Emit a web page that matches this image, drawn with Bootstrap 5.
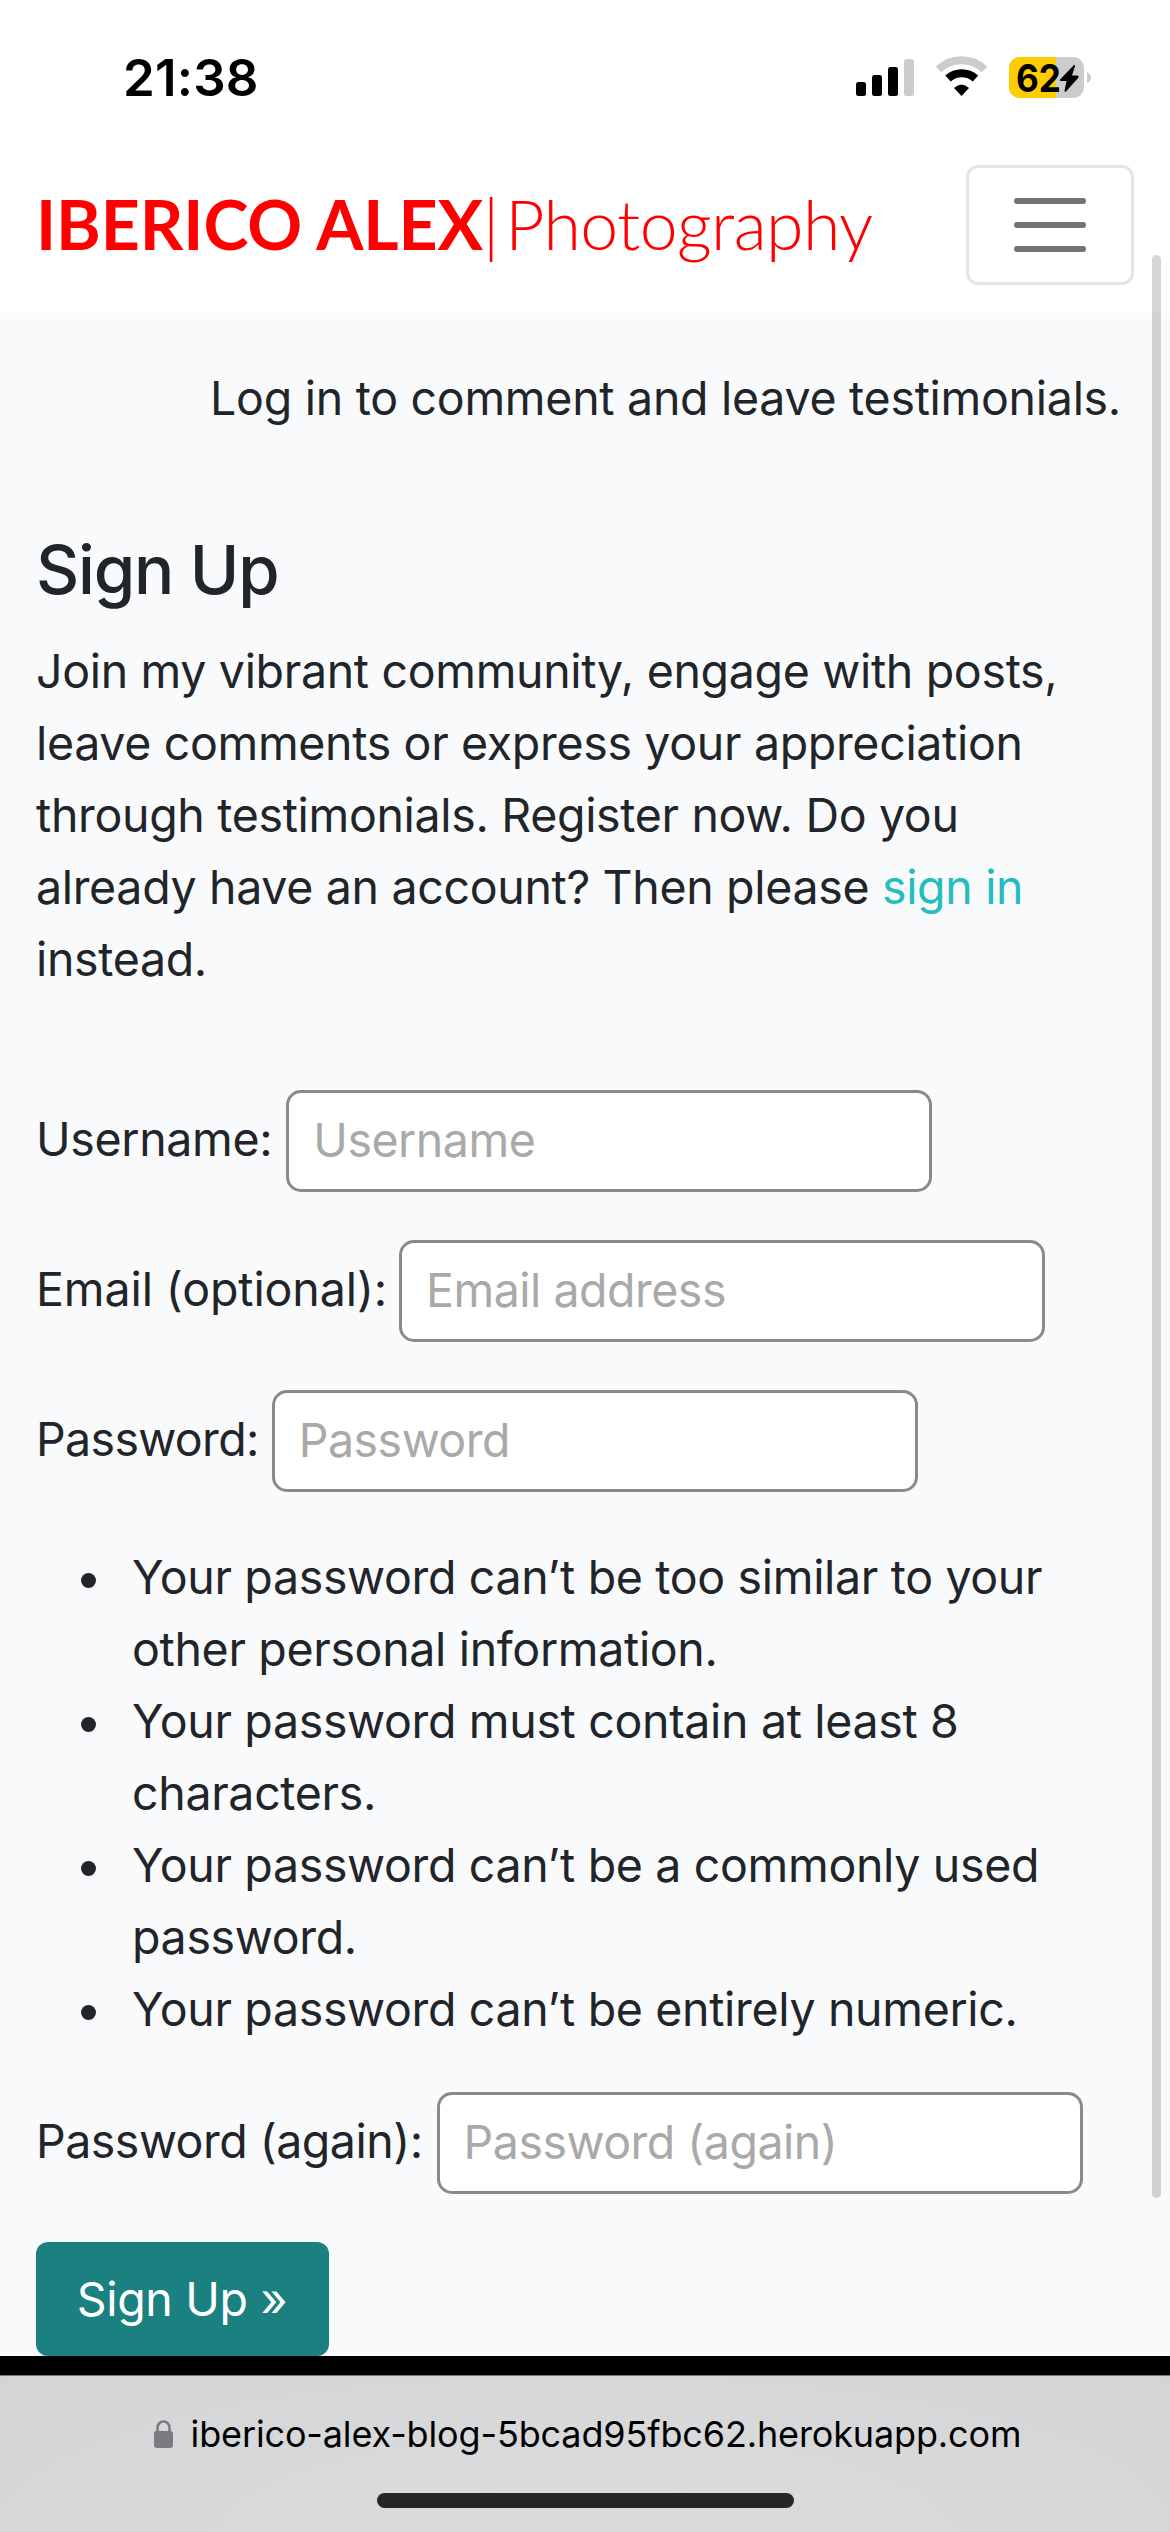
<!DOCTYPE html>
<html lang="en">
<head>
<meta charset="utf-8">
<meta name="viewport" content="width=device-width, initial-scale=1">
<title>Iberico Alex | Photography</title>
<link href="https://cdn.jsdelivr.net/npm/bootstrap@5.3.0/dist/css/bootstrap.min.css" rel="stylesheet">
<style>
body{width:1170px;height:2532px;overflow:hidden;background:#f9fafc;color:#212529;font:400 46.5px/72px Inter,"Liberation Sans",sans-serif;letter-spacing:-.33px}
.status-bar{height:153px;padding:57px 79px 0 123px}
.clock{font-size:51px;font-weight:600;line-height:42px;color:#000;letter-spacing:.2px}
.site-nav{height:160px;padding:12px 36px 28px;--bs-navbar-padding-y:0}
.site-nav .navbar-brand{font-family:Lato,sans-serif;font-size:68px;line-height:118px;color:#f00;letter-spacing:-.1px;margin:0;padding:0}
.site-nav .navbar-brand:hover{color:#f00}
.site-nav .thin{font-weight:300;letter-spacing:-.6px}
.site-nav .thin-bar{font-weight:300;margin-right:6px}
.site-nav .navbar-toggler{width:168px;height:120px;border:3px solid #e5e5e5;border-radius:12px}
.page-main{height:2043px;overflow:hidden;padding:49px 36px 0}
.login-note{padding-right:13px;margin-bottom:96px;letter-spacing:-.28px}
.page-main h1{font-size:67px;font-weight:500;line-height:80px;margin-bottom:25px;letter-spacing:-1.2px}
.page-main a{color:#24bdbd}
.intro{margin-bottom:95px}
.field-row{height:102px;margin-bottom:48px}
.field-row label{padding-bottom:5px;margin-right:14px}
.field-row .lbl-email{letter-spacing:-.1px;margin-right:12px}
.field-row .lbl-pass{letter-spacing:-.65px;margin-right:13px}
.field-row .lbl-again{letter-spacing:-.5px}
.field-row .form-control{width:646px;height:102px;border:3px solid #8a898e;border-radius:15px;padding:0 24px 3px;font-size:46.5px;letter-spacing:-.5px;background:#fff}
.field-row .form-control::placeholder{color:#a9a9a9}
.rules{padding-left:96px;margin:49px 0 47px}
.rules li::before{content:"";position:absolute;left:-51px;top:32px;width:15px;height:15px;border-radius:50%;background:#212529}
.btn-signup{width:293px;height:114px;border:0;border-radius:12px;background:#1a8080;color:#fff;font-size:46.5px;padding:2px 1px 0 0;letter-spacing:-.3px}
.divider{height:20px;background:#000;border-bottom:1px solid #77777a}
.url-bar{height:156px;background:radial-gradient(ellipse at 50% 100%,#dadbdd 20%,#d3d4d6 100%);padding-top:36px}
.url-line{gap:18px;padding-left:5px}
.url-text{font-size:36px;line-height:44px;color:#000;letter-spacing:-.14px}
.home-line{width:417px;height:15px;border-radius:8px;background:#272727;margin-top:37px}
.scroll-thumb{position:absolute;left:1152px;top:255px;width:9px;height:1943px;border-radius:5px;background:rgba(0,0,0,.16)}
</style>
<script src="https://cdn.jsdelivr.net/npm/bootstrap@5.3.0/dist/js/bootstrap.bundle.min.js"></script>
</head>
<body class="position-relative">
<header class="bg-white">
  <div class="status-bar d-flex justify-content-between align-items-start">
    <span class="clock">21:38</span>
    <svg width="240" height="44" viewBox="0 0 240 44" overflow="visible" aria-label="Signal, Wi-Fi, battery 62%">
      <g><rect x="5" y="25" width="10" height="14" rx="2.5"/><rect x="21" y="18" width="10" height="21" rx="2.5"/><rect x="37" y="10" width="10" height="29" rx="2.5"/><rect x="53" y="2" width="10" height="37" rx="2.5" fill="#ccc"/></g>
      <g fill="none" stroke-width="8"><path d="M87.500 12.500A33 33 0 0 1 133.500 12.500" stroke="#ccc"/><path d="M97 21.500A20.500 20.500 0 0 1 124.500 21.500" stroke="#000"/></g>
      <path d="M103 31Q110.500 24 118 31L110.500 39Z"/>
      <clipPath id="cell"><rect x="158" width="75" height="41" rx="11"/></clipPath>
      <g clip-path="url(#cell)"><rect x="158" width="75" height="41" fill="#ccc"/><rect x="158" width="47" height="41" fill="#fc0"/></g>
      <path d="M236 15Q240 17 240 20.500T236 26Z" fill="#ccc"/>
      <text x="165" y="34.500" font-family="Inter" font-weight="700" font-size="38" letter-spacing="0" textLength="45" lengthAdjust="spacingAndGlyphs">62</text>
      <path d="M223 8L209 22.500Q208.500 24 210 24H215.500L213.500 34Q214 35.500 215 34.500L227.500 20.500Q228 19 226.500 18.500H221L224 9Q224 7.500 223 8Z"/>
    </svg>
  </div>
  <nav class="navbar site-nav align-items-start">
    <a class="navbar-brand" href="#"><b>IBERICO ALEX</b><span class="thin-bar">|</span><span class="thin">Photography</span></a>
    <button class="navbar-toggler d-flex align-items-center justify-content-center p-0" type="button" aria-label="Toggle navigation">
      <svg width="72" height="54" viewBox="0 0 72 54" stroke="#737373" stroke-width="6" stroke-linecap="round"><path d="M3 3H69M3 27H69M3 51H69"/></svg>
    </button>
  </nav>
</header>
<main class="page-main">
  <p class="login-note text-end">Log in to comment and leave testimonials.</p>
  <h1>Sign Up</h1>
  <p class="intro">Join my vibrant community, engage with posts,<br>leave comments or express your appreciation<br>through testimonials. Register now. Do you<br>already have an account? Then please <a href="#" class="text-decoration-none">sign in</a><br>instead.</p>
  <form>
    <div class="field-row d-flex align-items-center"><label for="u">Username:</label><input id="u" class="form-control" placeholder="Username"></div>
    <div class="field-row d-flex align-items-center"><label class="lbl-email" for="e">Email (optional):</label><input id="e" type="email" class="form-control" placeholder="Email address"></div>
    <div class="field-row d-flex align-items-center"><label class="lbl-pass" for="p">Password:</label><input id="p" type="password" class="form-control" placeholder="Password"></div>
    <ul class="rules list-unstyled">
      <li class="position-relative">Your password can’t be too similar to your<br>other personal information.</li>
      <li class="position-relative">Your password must contain at least 8<br>characters.</li>
      <li class="position-relative">Your password can’t be a commonly used<br>password.</li>
      <li class="position-relative">Your password can’t be entirely numeric.</li>
    </ul>
    <div class="field-row d-flex align-items-center"><label class="lbl-again" for="q">Password (again):</label><input id="q" type="password" class="form-control" placeholder="Password (again)"></div>
    <button class="btn btn-signup d-block" type="button">Sign Up »</button>
  </form>
</main>
<div class="divider"></div>
<footer class="url-bar d-flex flex-column align-items-center">
  <div class="url-line d-flex align-items-center">
    <svg width="19" height="28" viewBox="0 0 19 28"><rect y="11" width="19" height="17" rx="3" fill="#7b7a7f"/><path d="M3.500 12V7.500a6 6 0 0 1 12 0V12" fill="none" stroke="#7b7a7f" stroke-width="2.500"/></svg>
    <span class="url-text">iberico-alex-blog-5bcad95fbc62.herokuapp.com</span>
  </div>
  <div class="home-line"></div>
</footer>
<div class="scroll-thumb"></div>
</body>
</html>
